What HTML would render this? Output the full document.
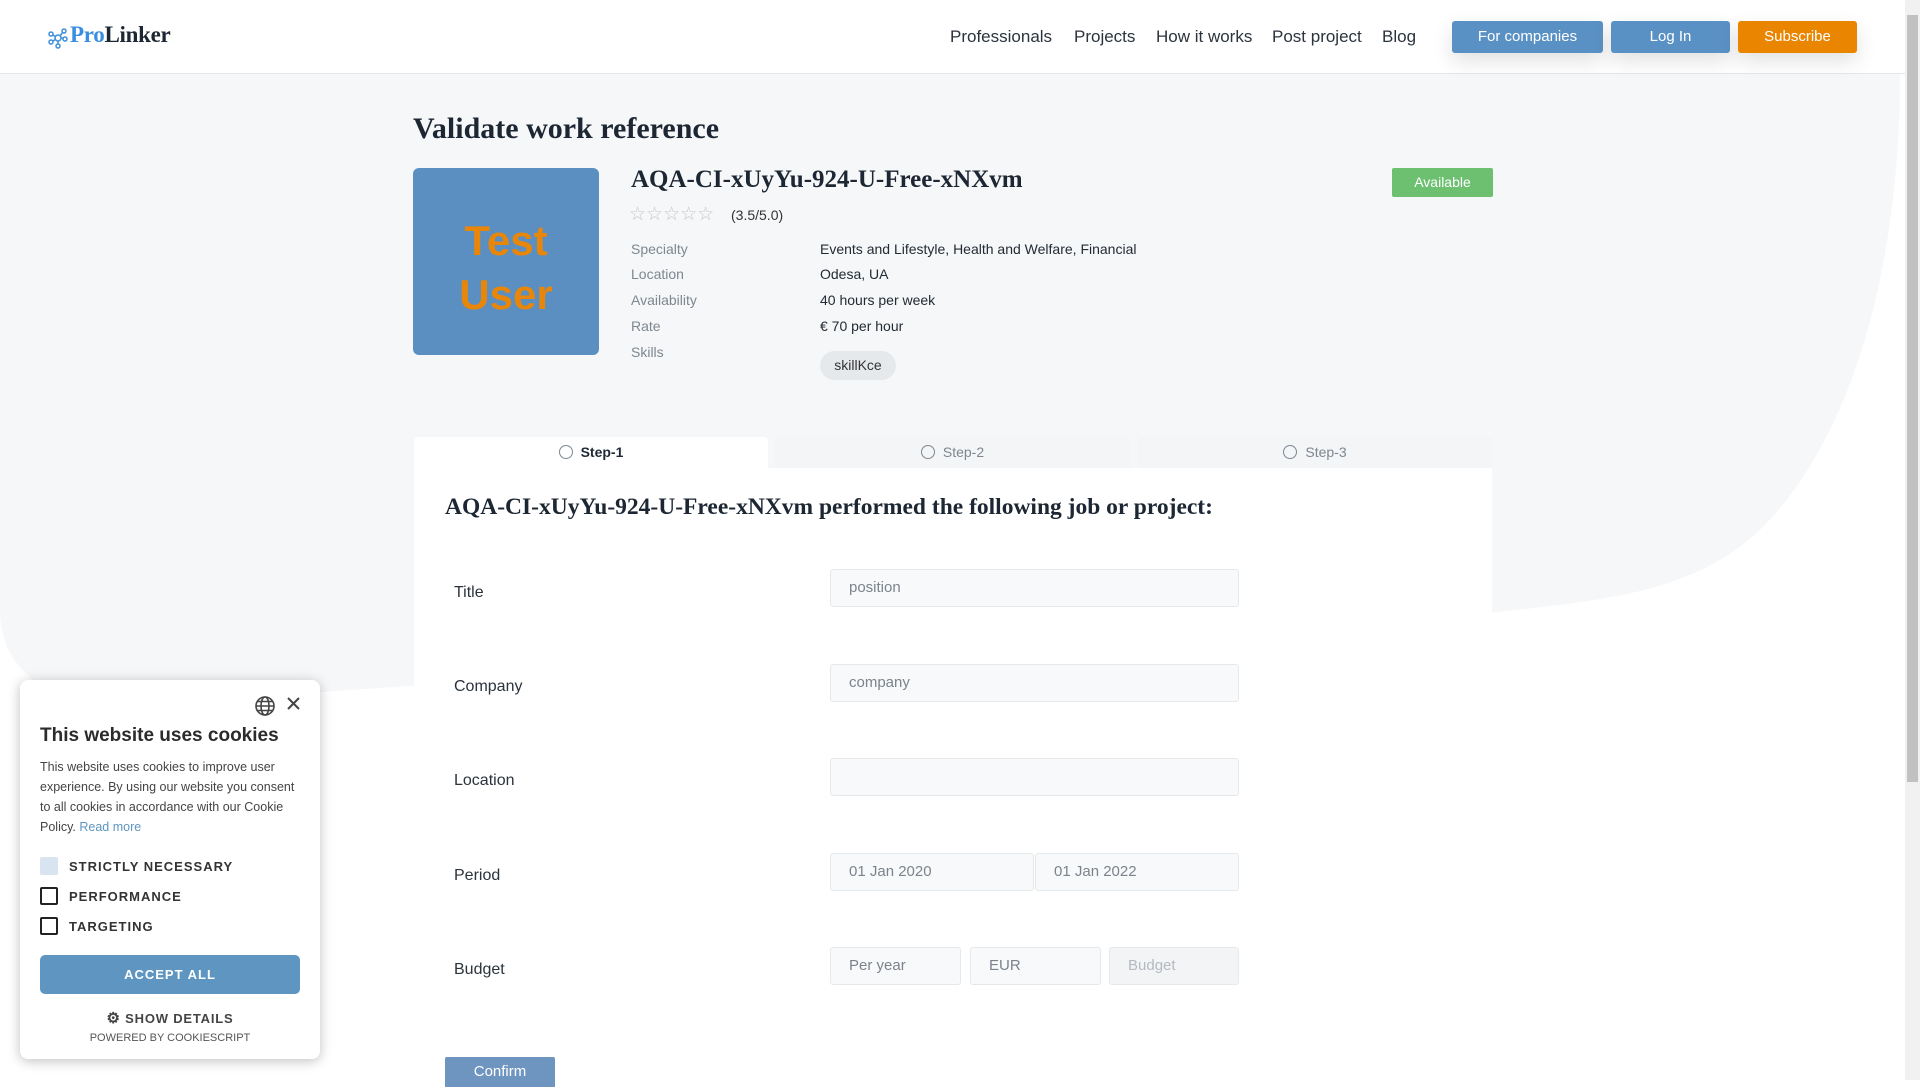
<!DOCTYPE html>
<html><head><meta charset="utf-8"><style>
*{box-sizing:border-box;margin:0;padding:0}
body{width:1920px;height:1080px;overflow:hidden;position:relative;background:#fff;font-family:"Liberation Sans",sans-serif;color:#1f2a36}
.abs{position:absolute}
.slab{font-family:"Liberation Serif",serif;font-weight:bold;color:#1c2733}
header{position:absolute;left:0;top:0;width:1905px;height:74px;background:#fff;border-bottom:1px solid #e4e6e9}
.nav{position:absolute;top:27px;font-size:17px;color:#2b333c}
.btn{position:absolute;top:21px;height:32px;border-radius:3px;color:#fff;font-size:15px;text-align:center;line-height:32px;box-shadow:0 8px 20px rgba(0,0,0,.12)}
.lbl{position:absolute;left:631px;font-size:14px;color:#7d8790}
.val{position:absolute;left:820px;font-size:14px;color:#222b33}
.tab{position:absolute;top:437px;height:31px;font-size:14px;color:#7d8790;text-align:center;line-height:31px;border-radius:4px 4px 0 0;background:#f3f5f7}
.tab i{display:inline-block;width:14px;height:14px;border:1.5px solid #7d8790;border-radius:50%;vertical-align:-2px;margin-right:8px}
.flbl{position:absolute;left:454px;font-size:16px;color:#2b333c}
.inp{position:absolute;height:38px;border:1px solid #e6e9ec;border-radius:3px;background:#f8f9fa;font-size:15px;color:#7b838b;line-height:36px;padding-left:18px}
.cb{position:absolute;left:40px;width:18px;height:18px;border:2px solid #222;border-radius:2px}
.cbt{position:absolute;left:69px;font-size:13px;font-weight:bold;letter-spacing:1px;color:#333}
</style></head><body>
<svg class="abs" style="left:0;top:0" width="1905" height="1080">
<path d="M0,74 L1900,74 C1900,250 1860,430 1760,530 C1690,595 1600,600 1490,613 L380,688 C200,700 90,712 45,688 C12,668 0,640 0,610 Z" fill="#f6f7f9"/>
</svg>
<header>
<svg class="abs" style="left:47px;top:27px" width="22" height="22" viewBox="0 0 22 22" fill="none" stroke="#3f8fd8" stroke-width="1.5"><circle cx="11" cy="11" r="3"/><circle cx="4" cy="7" r="2"/><circle cx="4" cy="15" r="2"/><circle cx="17" cy="4" r="2"/><circle cx="18" cy="12" r="2"/><circle cx="11" cy="19" r="2"/><path d="M6 8l3 2M6 14l3-2M13 9l3-4M14 11h2M11 14v3"/></svg>
<div class="abs slab" style="left:70px;top:22px;font-size:23px;letter-spacing:-.3px"><span style="color:#3a8ee0">Pro</span>Linker</div>
<div class="nav" style="left:950px">Professionals</div>
<div class="nav" style="left:1074px">Projects</div>
<div class="nav" style="left:1156px">How it works</div>
<div class="nav" style="left:1272px">Post project</div>
<div class="nav" style="left:1382px">Blog</div>
<div class="btn" style="left:1452px;width:151px;background:#5a91c4">For companies</div>
<div class="btn" style="left:1611px;width:119px;background:#5a91c4">Log In</div>
<div class="btn" style="left:1738px;width:119px;background:#ea8500">Subscribe</div>
</header>
<div class="abs" style="left:1905px;top:0;width:15px;height:1080px;background:#f1f1f1"></div>
<div class="abs" style="left:1907px;top:15px;width:11px;height:767px;background:#c1c1c1"></div>

<div class="abs slab" style="left:413px;top:112px;font-size:30px">Validate work reference</div>
<div class="abs" style="left:413px;top:168px;width:186px;height:187px;background:#5b8fc2;border-radius:6px;color:#e8860a;font-weight:bold;font-size:42px;text-align:center;line-height:54px;padding-top:46px">Test<br>User</div>
<div class="abs slab" style="left:631px;top:166px;font-size:25px">AQA-CI-xUyYu-924-U-Free-xNXvm</div>
<div class="abs" style="left:629px;top:203px;font-size:19px;color:#c4c8cc;letter-spacing:0px">☆☆☆☆☆</div>
<div class="abs" style="left:731px;top:207px;font-size:14px;color:#333">(3.5/5.0)</div>
<div class="abs" style="left:1392px;top:168px;width:101px;height:29px;background:#6cc070;color:#fff;font-size:14px;text-align:center;line-height:29px;border-radius:2px">Available</div>
<div class="lbl" style="top:241px">Specialty</div><div class="val" style="top:241px">Events and Lifestyle, Health and Welfare, Financial</div>
<div class="lbl" style="top:266px">Location</div><div class="val" style="top:266px">Odesa, UA</div>
<div class="lbl" style="top:292px">Availability</div><div class="val" style="top:292px">40 hours per week</div>
<div class="lbl" style="top:318px">Rate</div><div class="val" style="top:318px">€ 70 per hour</div>
<div class="lbl" style="top:344px">Skills</div>
<div class="abs" style="left:820px;top:351px;width:76px;height:29px;background:#e6e9ec;border-radius:15px;font-size:14px;text-align:center;line-height:29px;color:#333">skillKce</div>

<div class="abs" style="left:414px;top:468px;width:1078px;height:620px;background:#fff"></div>
<div class="tab" style="left:414px;width:354px;background:#fff;color:#1f2a36;font-weight:bold"><i></i>Step-1</div>
<div class="tab" style="left:775px;width:355px"><i></i>Step-2</div>
<div class="tab" style="left:1138px;width:354px"><i></i>Step-3</div>
<div class="abs slab" style="left:445px;top:494px;font-size:23.5px">AQA-CI-xUyYu-924-U-Free-xNXvm performed the following job or project:</div>

<div class="flbl" style="top:584px">Title</div><div class="inp" style="left:830px;top:569px;width:409px">position</div>
<div class="flbl" style="top:678px">Company</div><div class="inp" style="left:830px;top:664px;width:409px">company</div>
<div class="flbl" style="top:772px">Location</div><div class="inp" style="left:830px;top:758px;width:409px"></div>
<div class="flbl" style="top:867px">Period</div><div class="inp" style="left:830px;top:853px;width:204px">01 Jan 2020</div><div class="inp" style="left:1035px;top:853px;width:204px">01 Jan 2022</div>
<div class="flbl" style="top:961px">Budget</div><div class="inp" style="left:830px;top:947px;width:131px">Per year</div><div class="inp" style="left:970px;top:947px;width:131px">EUR</div><div class="inp" style="left:1109px;top:947px;width:130px;background:#f3f4f6;color:#b4bac0">Budget</div>
<div class="abs" style="left:445px;top:1057px;width:110px;height:30px;background:#6e95bf;color:#fff;font-size:15px;text-align:center;line-height:30px;border-radius:2px 2px 0 0">Confirm</div>

<div class="abs" style="left:20px;top:680px;width:300px;height:379px;background:#fff;border-radius:8px;box-shadow:0 2px 12px rgba(0,0,0,.25)"></div>
<svg class="abs" style="left:255px;top:695px" width="50" height="22" viewBox="0 0 50 22" fill="none" stroke="#444" stroke-width="1.6"><circle cx="10" cy="11" r="9"/><ellipse cx="10" cy="11" rx="4" ry="9"/><path d="M1 11h18M2.5 6.5h15M2.5 15.5h15"/><path d="M33 3l11 11M44 3L33 14" stroke-width="2"/></svg>
<div class="abs" style="left:40px;top:725px;font-size:19px;font-weight:bold;color:#2b2b2b">This website uses cookies</div>
<div class="abs" style="left:40px;top:757px;width:265px;font-size:12.5px;line-height:20px;color:#444">This website uses cookies to improve user experience. By using our website you consent to all cookies in accordance with our Cookie Policy. <span style="color:#5e96c1">Read more</span></div>
<div class="cb" style="top:857px;background:#d8e4ef;border-color:#d8e4ef"></div><div class="cbt" style="top:859px">STRICTLY NECESSARY</div>
<div class="cb" style="top:887px"></div><div class="cbt" style="top:889px">PERFORMANCE</div>
<div class="cb" style="top:917px"></div><div class="cbt" style="top:919px">TARGETING</div>
<div class="abs" style="left:40px;top:955px;width:260px;height:39px;background:#5e96c1;border-radius:5px;color:#fff;font-weight:bold;font-size:13px;letter-spacing:1px;text-align:center;line-height:39px">ACCEPT ALL</div>
<div class="abs" style="left:0;width:340px;top:1009px;text-align:center;font-size:13px;font-weight:bold;letter-spacing:.8px;color:#444"><span style="font-size:15px">⚙</span> SHOW DETAILS</div>
<div class="abs" style="left:0;width:340px;top:1032px;text-align:center;font-size:11px;color:#555">POWERED BY COOKIESCRIPT</div>
</body></html>
